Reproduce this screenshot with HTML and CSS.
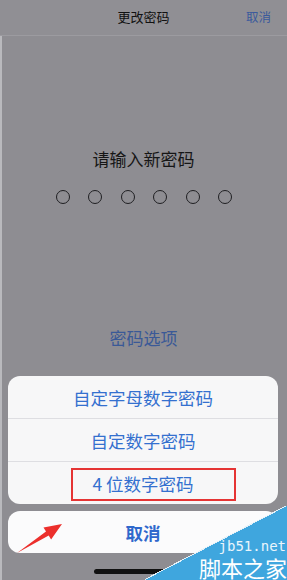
FILE: index.html
```html
<!DOCTYPE html>
<html lang="zh-CN">
<head>
<meta charset="utf-8">
<title>更改密码</title>
<link rel="stylesheet" href="styles.css">
</head>
<body>
<div class="screen">
  <header class="nav">
    <span></span>
    <span class="nav-title">更改密码</span>
    <span class="nav-cancel">取消</span>
  </header>
  <div class="prompt">请输入新密码</div>
  <div class="dots">
    <span class="dot"></span><span class="dot"></span><span class="dot"></span>
    <span class="dot"></span><span class="dot"></span><span class="dot"></span>
  </div>
  <div class="options">密码选项</div>
  <div class="sheet">
    <div class="sheet-row">自定字母数字密码</div>
    <div class="sheet-row">自定数字密码</div>
    <div class="sheet-row highlighted">4 位数字密码<span class="red-box"></span></div>
  </div>
  <div class="cancel-btn">取消</div>
  <div class="home-bar"></div>

  <svg class="arrow" width="70" height="40" viewBox="0 520 70 40">
    <polygon points="17,553 46,531.4 43.5,527.6 62,524 51.1,539.4 48.7,535.6" fill="#ec2f2c"/>
  </svg>
  <div class="corner-badge">
    <span class="cb-url">jb51.net</span>
    <span class="cb-name">脚本之家</span>
  </div>
</div>
</body>
</html>
```
FILE: styles.css
```css
* { box-sizing: border-box; margin: 0; padding: 0; }
html, body { width: 287px; height: 580px; overflow: hidden; }
body {
  background: #8e8d92;
  font-family: "Noto Sans CJK SC", "Noto Sans", sans-serif;
}
.screen {
  position: relative;
  width: 287px;
  height: 580px;
  display: flex;
  flex-direction: column;
  background: #8e8d92;
  box-shadow: inset 2px 0 #b9b9bd;
  overflow: hidden;
}
.nav {
  height: 36px;
  display: grid;
  grid-template-columns: 1fr auto 1fr;
  align-items: center;
  border-bottom: 1px solid #9c9ba0;
  background: #908f94;
}
.nav-title {
  font-size: 13px;
  line-height: 18px;
  color: #111;
  margin-top: -1px;
}
.nav-cancel {
  justify-self: end;
  padding-right: 16px;
  font-size: 12.5px;
  line-height: 18px;
  color: #3b5a9c;
  margin-top: -1px;
}
.prompt {
  margin-top: 111px;
  text-align: center;
  font-size: 17px;
  line-height: 24px;
  color: #161616;
}
.dots {
  margin-top: 19px;
  display: flex;
  justify-content: center;
  gap: 18.4px;
  padding-left: 1px;
}
.dot {
  width: 14px;
  height: 14px;
  border-radius: 50%;
  border: 1.3px solid #1f1f22;
}
.options {
  margin-top: 122px;
  text-align: center;
  font-size: 17px;
  line-height: 24px;
  color: #3a5997;
}
.sheet {
  margin: 26px 9px 0 8px;
  background: #f7f7f8;
  border-radius: 12px;
  display: flex;
  flex-direction: column;
}
.sheet-row {
  position: relative;
  height: 43px;
  display: flex;
  align-items: center;
  justify-content: center;
  font-size: 17.5px;
  color: #3470cf;
  border-top: 1px solid #dedee2;
}
.sheet-row:first-child { border-top: none; height: 42px; }
.red-box {
  position: absolute;
  left: 63px;
  top: 6px;
  width: 165px;
  height: 33px;
  border: 2px solid #e53434;
}
.cancel-btn {
  margin: 7px 9px 0 8px;
  height: 42px;
  background: #fbfbfc;
  border-radius: 12px;
  display: flex;
  align-items: center;
  justify-content: center;
  font-size: 17.5px;
  font-weight: 700;
  color: #2f68cc;
}
.home-bar {
  margin: 16px auto 0;
  width: 100px;
  height: 5px;
  border-radius: 3px;
  background: #111;
}
.arrow {
  position: absolute;
  left: 0;
  top: 520px;
}
.corner-badge {
  position: absolute;
  left: 145px;
  top: 506px;
  width: 142px;
  height: 74px;
  background: linear-gradient(to bottom right, transparent 0, transparent calc(50% - 1px), #e3f1f9 calc(50% - 1px), #e3f1f9 50%, #3fa6de 50%, #3fa6de 100%);
}
.cb-url {
  position: absolute;
  right: 1px;
  top: 33px;
  font-family: "DejaVu Sans Mono", "Liberation Mono", monospace;
  font-size: 14px;
  line-height: 14px;
  color: #eaf5fc;
}
.cb-name {
  position: absolute;
  right: 0;
  top: 49px;
  font-size: 22px;
  line-height: 24px;
  color: #ffffff;
  white-space: nowrap;
}
```
